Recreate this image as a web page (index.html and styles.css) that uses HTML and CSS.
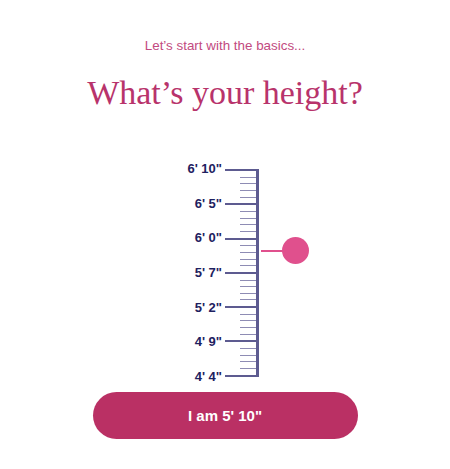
FILE: index.html
```html
<!DOCTYPE html>
<html>
<head>
<meta charset="utf-8">
<link rel="stylesheet" href="styles.css">
</head>
<body>
<main class="page">
  <p class="subtitle">Let’s start with the basics...</p>
  <h1 class="title">What’s your height?</h1>
  <div class="ruler">
    <div class="labels">
      <span>6' 10"</span>
      <span>6' 5"</span>
      <span>6' 0"</span>
      <span>5' 7"</span>
      <span>5' 2"</span>
      <span>4' 9"</span>
      <span>4' 4"</span>
    </div>
    <div class="scale">
      <i class="major"></i><i></i><i></i><i></i><i></i>
      <i class="major"></i><i></i><i></i><i></i><i></i>
      <i class="major"></i><i></i><i></i><i></i><i></i>
      <i class="major"></i><i></i><i></i><i></i><i></i>
      <i class="major"></i><i></i><i></i><i></i><i></i>
      <i class="major"></i><i></i><i></i><i></i><i></i>
      <i class="major"></i>
      <div class="pointer"><span class="stem"></span><span class="knob"></span></div>
    </div>
  </div>
  <button class="cta">I am 5' 10"</button>
</main>
</body>
</html>
```

FILE: styles.css
```css
html, body {
  margin: 0;
  padding: 0;
  background: #ffffff;
}

.page {
  display: flex;
  flex-direction: column;
  align-items: center;
  width: 450px;
  height: 469px;
  font-family: "Liberation Sans", Arial, sans-serif;
}

.subtitle {
  margin: 38px 0 0;
  font-size: 13.4px;
  line-height: 16px;
  color: #c24a80;
}

.title {
  margin: 19px 0 0;
  font-family: "Liberation Serif", "Times New Roman", serif;
  font-weight: normal;
  font-size: 34px;
  line-height: 40px;
  color: #b8336b;
}

.ruler {
  display: flex;
  margin: 49px 0 0 40px;
  width: 126px;
}

.labels {
  display: flex;
  flex-direction: column;
  justify-content: space-between;
  align-items: flex-end;
  width: 40px;
  height: 222px;
  margin-right: 3px;
  font-size: 13px;
  font-weight: bold;
  line-height: 14px;
  color: #1e2160;
}

.scale {
  position: relative;
  display: flex;
  flex-direction: column;
  justify-content: space-between;
  align-items: flex-end;
  width: 31px;
  height: 208px;
  margin-top: 7px;
  border-right: 3px solid #5d5b90;
}

.scale i {
  display: block;
  width: 16px;
  height: 1px;
  background: #8e8cb4;
}

.scale i.major {
  width: 31px;
  height: 2px;
  background: #5d5b90;
}

.pointer {
  position: absolute;
  left: 36px;
  top: 68px;
  display: flex;
  align-items: center;
}

.stem {
  display: block;
  width: 22px;
  height: 2px;
  background: #e0508d;
}

.knob {
  display: block;
  width: 27px;
  height: 27px;
  margin-left: -1px;
  border-radius: 50%;
  background: #e0508d;
}

.cta {
  margin-top: 8px;
  width: 265px;
  height: 47px;
  border: none;
  border-radius: 24px;
  background: #ba3064;
  color: #ffffff;
  font-family: "Liberation Sans", Arial, sans-serif;
  font-size: 15px;
  font-weight: bold;
  cursor: pointer;
}
```
